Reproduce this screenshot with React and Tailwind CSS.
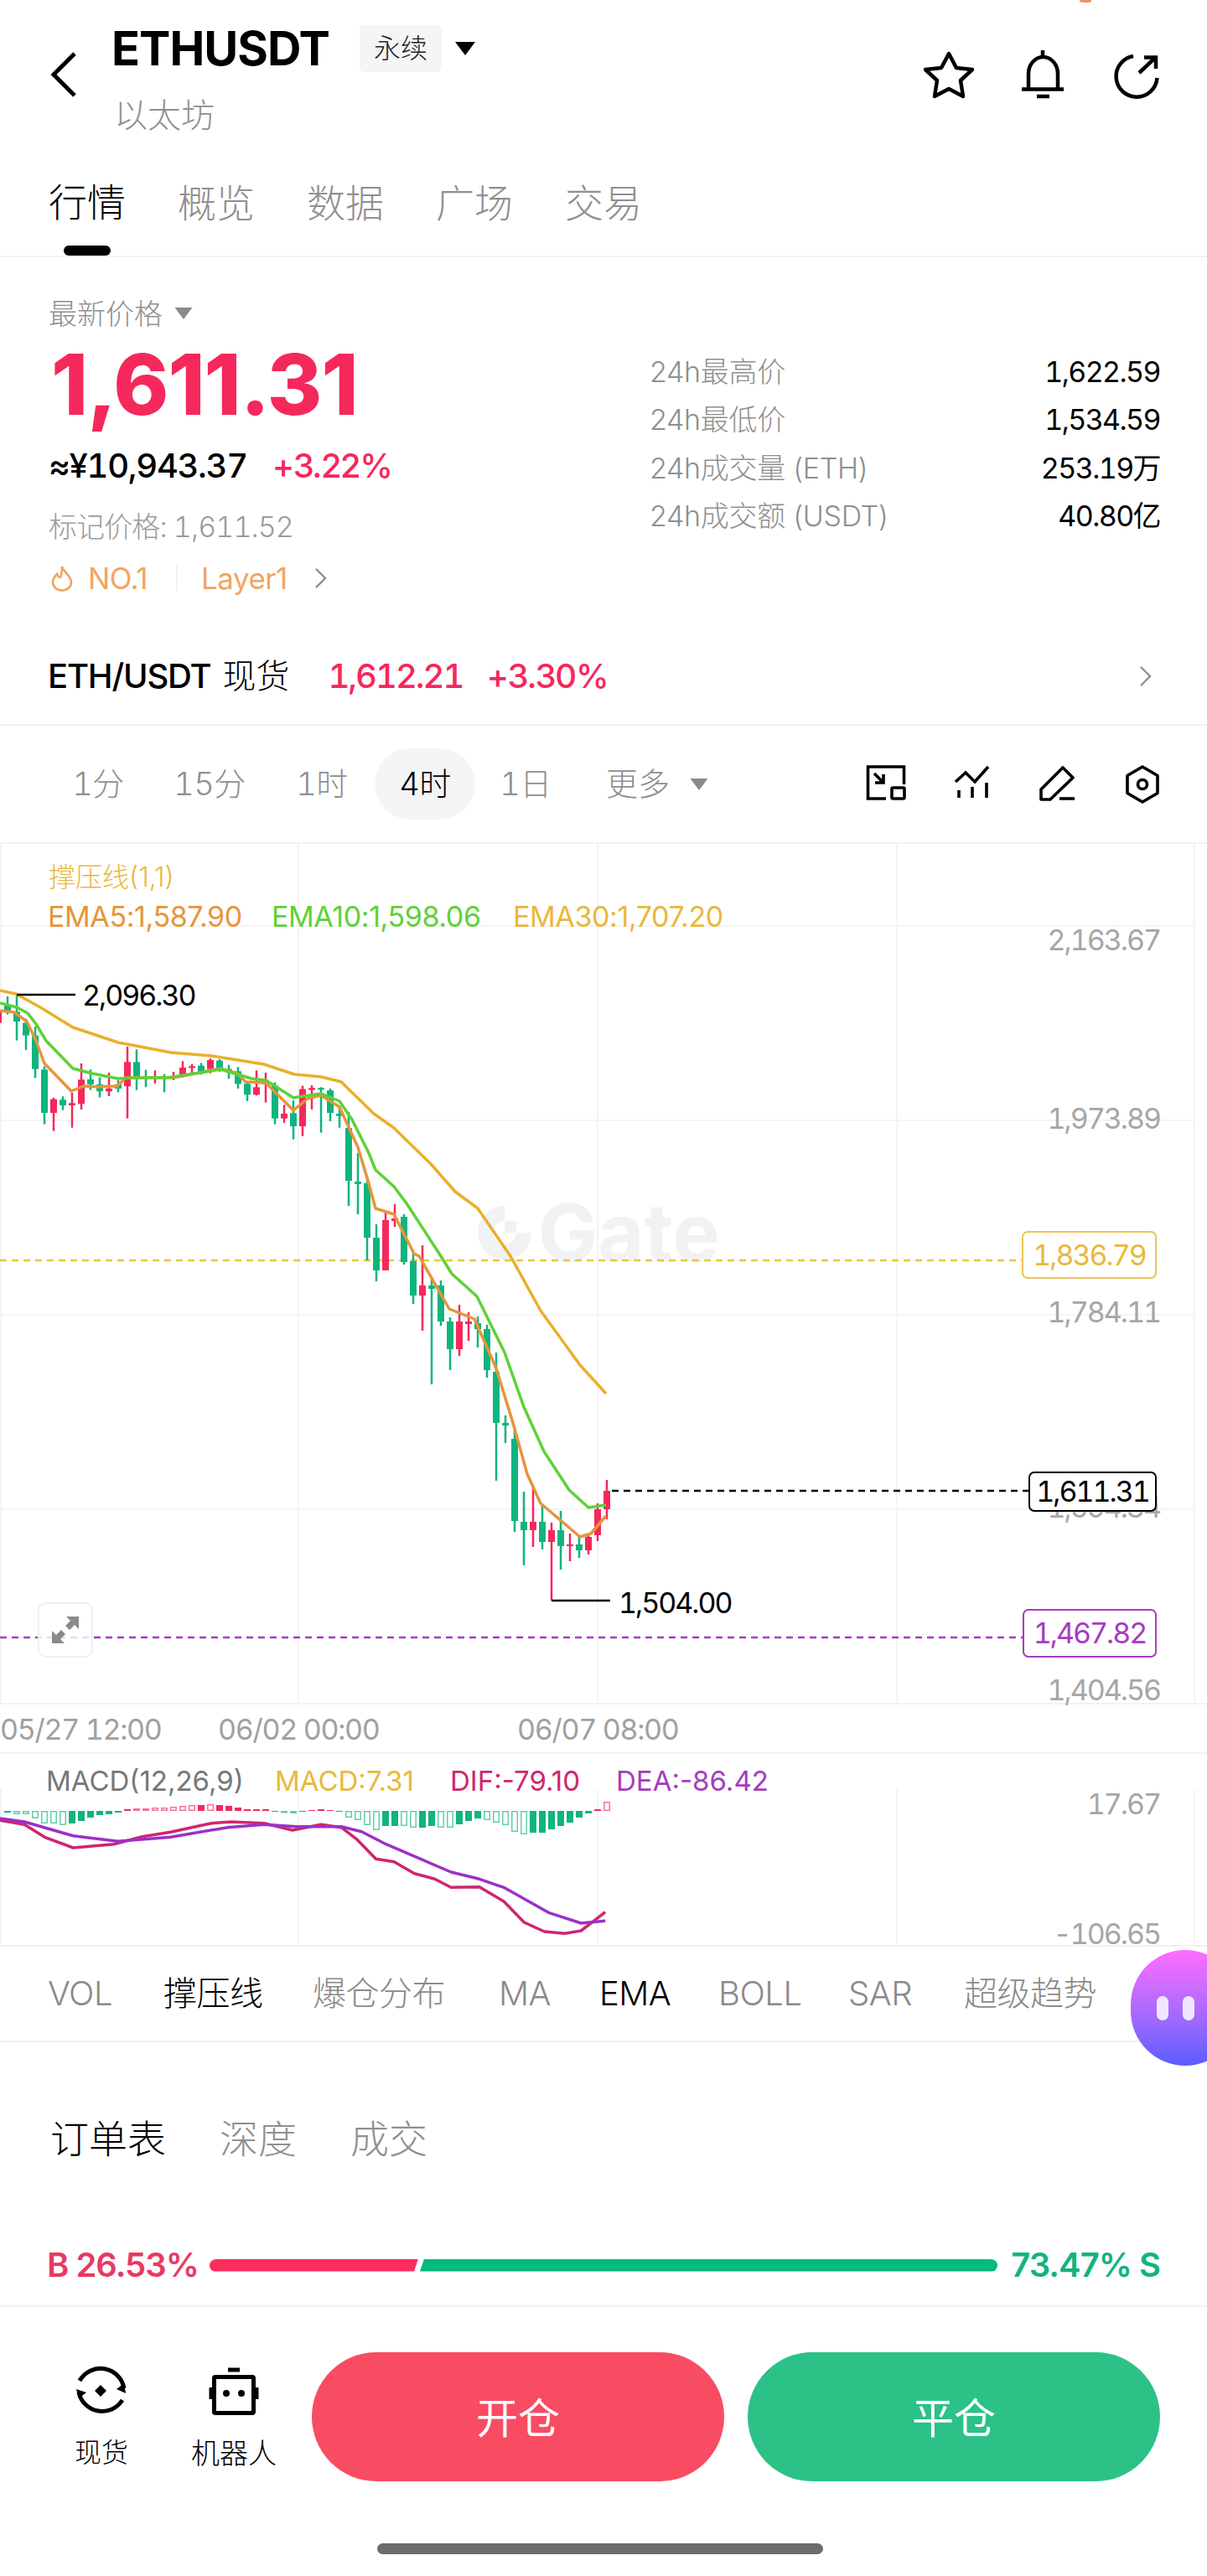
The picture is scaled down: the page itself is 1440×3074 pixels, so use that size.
const RED = '#f5285c';
const GREEN = '#0fb47f';

// candles left part, measured as [index, colour, wickTop, wickBottom, bodyTop, bodyBottom] in y offset / 3 from 1180
const EARLY = [
  [-1, 'r', 60, 125, 80, 125], [0, 'g', 30, 95, 60, 85], [1, 'g', 25, 188, 85, 120], [2, 'g', 110, 222, 125, 170],
  [3, 'g', 138, 322, 170, 290], [4, 'g', 280, 488, 292, 447], [5, 'r', 393, 512, 398, 447], [6, 'g', 388, 437, 400, 420],
  [7, 'r', 375, 500, 412, 420], [8, 'r', 270, 435, 328, 415], [9, 'g', 292, 365, 327, 345], [10, 'g', 320, 392, 345, 370],
  [11, 'r', 303, 387, 360, 370], [12, 'g', 330, 373, 345, 360], [13, 'r', 210, 467, 265, 352], [14, 'g', 220, 365, 265, 320],
  [15, 'g', 293, 355, 318, 325], [16, 'r', 295, 342, 320, 326], [17, 'g', 308, 373, 320, 326], [18, 'r', 300, 330, 318, 322],
  [19, 'r', 262, 320, 285, 310], [20, 'r', 272, 305, 280, 285], [21, 'g', 268, 310, 278, 300], [22, 'r', 252, 305, 258, 290],
  [23, 'g', 255, 300, 260, 288], [24, 'g', 275, 325, 290, 300], [25, 'g', 283, 360, 298, 343], [26, 'g', 335, 405, 343, 382],
  [27, 'r', 295, 385, 355, 382], [28, 'r', 303, 410, 335, 345], [29, 'g', 338, 488, 350, 467], [30, 'r', 418, 483, 450, 467],
  [31, 'g', 402, 542, 448, 495], [32, 'r', 350, 530, 362, 495], [33, 'r', 348, 435, 358, 365], [34, 'g', 355, 518, 358, 362],
  [35, 'g', 360, 477, 367, 447], [36, 'g', 420, 500, 450, 458],
].map(([i, c, a, b, d, e]) => [i, c, 1180 + a / 3, 1180 + b / 3, 1180 + d / 3, 1180 + e / 3]);

const LATE = [
  [37, 'g', 1328, 1440, 1347, 1410], [38, 'g', 1377, 1450, 1411, 1414], [39, 'g', 1405, 1505, 1413, 1478],
  [40, 'g', 1462, 1530, 1478, 1517], [41, 'r', 1448, 1517, 1457, 1517], [42, 'r', 1438, 1465, 1455, 1458],
  [43, 'g', 1450, 1510, 1453, 1507], [44, 'g', 1495, 1557, 1506, 1547], [45, 'r', 1487, 1589, 1535, 1547],
  [46, 'g', 1527, 1653, 1535, 1539], [47, 'g', 1529, 1583, 1535, 1578], [48, 'g', 1573, 1636, 1578, 1611],
  [49, 'r', 1558, 1619, 1578, 1611], [50, 'r', 1567, 1601, 1578, 1581], [51, 'g', 1572, 1609, 1580, 1587],
  [52, 'g', 1582, 1645, 1587, 1636], [53, 'g', 1615, 1768, 1638, 1699], [54, 'g', 1690, 1723, 1699, 1702],
  [55, 'g', 1703, 1829, 1718, 1816], [56, 'g', 1781, 1869, 1817, 1827], [57, 'r', 1774, 1847, 1817, 1827],
  [58, 'g', 1797, 1850, 1817, 1841], [59, 'r', 1818, 1911, 1827, 1841], [60, 'g', 1804, 1874, 1827, 1846],
  [61, 'r', 1831, 1864, 1844, 1846], [62, 'g', 1833, 1860, 1844, 1851], [63, 'r', 1833, 1856, 1835, 1851],
  [64, 'r', 1795, 1840, 1802, 1833], [65, 'r', 1767, 1814, 1780, 1802],
];

const EMA30 = '0,1183 19,1187 48,1203 87,1227 141,1245 204,1257 252,1261 315,1271 351,1283 383,1286 407,1292 446,1330 470,1347 514,1390 543,1423 570,1443 609,1500 645,1565 692,1630 723,1664';
const EMA10 = '0,1198 20,1203 33,1210 43,1223 55,1243 87,1276 110,1282 140,1288 173,1287 200,1287 233,1282 263,1277 283,1283 300,1288 317,1290 350,1311 383,1306 405,1315 420,1337 440,1377 448,1397 470,1417 485,1437 526,1500 539,1521 569,1548 602,1615 625,1680 649,1733 679,1779 702,1800 723,1797';
const EMA5 = '0,1207 17,1209 32,1220 43,1243 53,1270 85,1303 100,1297 117,1298 140,1297 150,1287 173,1287 207,1287 233,1282 263,1276 283,1282 293,1292 317,1293 350,1326 367,1312 383,1308 405,1322 427,1370 439,1410 448,1443 470,1450 494,1497 500,1500 536,1563 566,1575 592,1634 612,1699 629,1760 645,1795 692,1835 705,1831 723,1810';

const macdPoints = (pts) => pts.map(([x, y]) => `${(x / 2.063).toFixed(1)},${(2060 + y / 3).toFixed(1)}`).join(' ');
const DEA = macdPoints([[0, 333], [60, 345], [180, 395], [290, 415], [420, 400], [560, 365], [650, 355], [730, 362], [840, 362], [890, 380], [950, 425], [1110, 525], [1180, 550], [1240, 580], [1350, 670], [1430, 708], [1490, 700]]);
const DIF = macdPoints([[0, 340], [60, 355], [110, 400], [180, 438], [280, 425], [350, 398], [420, 382], [520, 350], [570, 345], [650, 350], [720, 375], [790, 355], [840, 365], [880, 410], [925, 478], [970, 488], [1020, 530], [1070, 550], [1110, 580], [1180, 578], [1240, 630], [1290, 705], [1340, 738], [1390, 745], [1430, 735], [1490, 668]]);

const HIST = [-2, -4, -4, -9, -15, -15, -17, -15, -12, -8, -5, -4, -2, 2, 3, 3, 4, 4, 5, 6, 7, 7, 8, 7, 6, 4, 2, 2, 2, -1, -2, -3, -1, 1, 2, 1, -1, -8, -11, -17, -23, -18, -18, -18, -20, -20, -18, -20, -20, -16, -12, -9, -11, -14, -17, -25, -28, -26, -26, -22, -18, -14, -8, -3, 2, 11];
const HOLLOW = new Set([1, 2, 3, 4, 5, 6, 14, 15, 16, 17, 18, 19, 20, 22, 30, 31, 37, 38, 39, 40, 43, 44, 47, 48, 52, 53, 54, 55, 56, 65]);

const GRID_X = [356, 713, 1070, 1425];

function Caret({ className }) {
  return (
    <svg viewBox="0 0 24 16" className={className}>
      <path d="M0 0H24L12 16Z" fill="currentColor" />
    </svg>
  );
}

function Chevron({ className }) {
  return (
    <svg viewBox="0 0 16 28" fill="none" stroke="currentColor" strokeWidth="2.5" className={className}>
      <path d="M2 2L14 14L2 26" />
    </svg>
  );
}

function Header() {
  return (
    <header className="flex items-start h-[190px] pl-[60px] pr-[54px]">
      <svg viewBox="0 0 32 54" fill="none" stroke="#000" strokeWidth="5" className="w-[32px] h-[54px] mt-[62px] mr-[41px] shrink-0">
        <path d="M29 2L4 27L29 52" />
      </svg>
      <div className="mt-[26px]">
        <div className="flex items-center h-[64px]">
          <span className="w-[264px] text-[56px] leading-none font-bold tracking-[-1px] text-black">ETHUSDT</span>
          <span className="ml-[32px] w-[98px] h-[56px] rounded-[6px] bg-[#f5f5f5] flex items-center justify-center text-[32px] font-light text-[#222]">永续</span>
          <Caret className="ml-[16px] w-[24px] h-[16px] text-black" />
        </div>
        <div className="mt-[24px] ml-[3px] text-[40px] leading-[48px] font-light text-[#8f8f8f]">以太坊</div>
      </div>
      <div className="ml-auto flex gap-[52px] mt-[60px]">
        <svg viewBox="12 10 60 60" fill="none" stroke="#000" strokeWidth="4.5" strokeLinejoin="round" className="w-[60px] h-[60px]">
          <path d="M42 14L51 31L70 33L56 46L59 65L42 56L25 65L28 46L14 33L33 31Z" />
        </svg>
        <svg viewBox="124 10 60 60" fill="none" stroke="#000" strokeWidth="4.5" className="w-[60px] h-[60px]">
          <path d="M137 56V38A17.5 20 0 0 1 172 38V56" />
          <path d="M129 56.5H179M147 65H162M154 10V18" />
        </svg>
        <svg viewBox="236 10 60 60" fill="none" stroke="#000" strokeWidth="4.5" className="w-[60px] h-[60px]">
          <path d="M262 17A24.5 24.5 0 1 0 290.5 43" />
          <path d="M269 37L287 20M275 18.5H289V32" />
        </svg>
      </div>
    </header>
  );
}

function MainTabs() {
  const tabs = ['行情', '概览', '数据', '广场', '交易'];
  return (
    <nav className="flex gap-[66px] h-[117px] pl-[60px] border-b-2 border-[#f2f2f2]">
      {tabs.map((t, i) => (
        <div key={t} className="flex flex-col items-center w-[88px]">
          <span className={`h-[104px] flex items-center text-[46px] font-light whitespace-nowrap ${i === 0 ? 'text-black' : 'text-[#8f8f8f]'}`}>{t}</span>
          {i === 0 && <span className="w-[56px] h-[12px] rounded-full bg-black" />}
        </div>
      ))}
    </nav>
  );
}

function PriceBlock() {
  const stats = [
    ['24h最高价', '1,622.59'],
    ['24h最低价', '1,534.59'],
    ['24h成交量 (ETH)', '253.19万'],
    ['24h成交额 (USDT)', '40.80亿'],
  ];
  return (
    <section className="flex h-[443px]">
      <div className="w-[775px] pl-[58px] pt-[47px]">
        <div className="flex items-center h-[40px] text-[#8f8f8f]">
          <span className="text-[34px] font-light">最新价格</span>
          <Caret className="ml-[14px] w-[22px] h-[14px] text-[#8a8a8a]" />
        </div>
        <div className="mt-[10px] ml-[3px] h-[110px] flex items-center text-[100px] leading-none font-extrabold tracking-[-1px] text-[#f5285c]">1,611.31</div>
        <div className="mt-[17px] h-[50px] flex items-center text-[40px] font-medium tracking-[-1.3px] tabular-nums">
          <span className="text-black">≈¥10,943.37</span>
          <span className="ml-[30px] text-[#f5285c] tracking-[-1.5px] [font-variant-numeric:normal]">+3.22%</span>
        </div>
        <div className="mt-[27px] h-[40px] flex items-center text-[34px] text-[#9b9b9b] font-light tabular-nums tracking-[-0.9px]">标记价格: 1,611.52</div>
        <div className="mt-[22px] h-[40px] flex items-center text-[35px] text-[#f2a45f]">
          <svg viewBox="0 0 28 32" fill="none" stroke="currentColor" strokeWidth="2.6" className="ml-[2px] w-[28px] h-[32px]">
            <path d="M14 2C15 8 25 13 25 21A11 9.5 0 0 1 3 21C3 16 6 13 8 11C9 14 10 15 12 15C14 11 14 6 14 2Z" />
          </svg>
          <span className="ml-[17px] w-[72px] tracking-[-0.5px]">NO.1</span>
          <span className="ml-[33px] w-[2px] h-[32px] bg-[#f3f3f3]" />
          <span className="ml-[28px] tracking-[-0.5px]">Layer1</span>
          <Chevron className="ml-[32px] w-[15px] h-[26px] text-[#8f8f8f]" />
        </div>
      </div>
      <div className="flex-1 pr-[56px] pt-[116px] flex flex-col gap-[17.5px]">
        {stats.map(([label, value]) => (
          <div key={label} className="flex items-center justify-between h-[40px] text-[34px]">
            <span className="font-light text-[#8f8f8f] tracking-[-0.3px]">{label}</span>
            <span className="text-black tracking-[-1.6px] tabular-nums">{value}</span>
          </div>
        ))}
      </div>
    </section>
  );
}

function SpotRow() {
  return (
    <section className="flex items-center h-[116px] pl-[57px] pr-[66px] border-b-2 border-[#f2f2f2] text-[40px]">
      <span className="text-black font-medium tracking-[-1.2px]">ETH/USDT</span>
      <span className="ml-[14px] font-light text-black">现货</span>
      <span className="ml-[46px] text-[#f5285c] font-medium tracking-[-2px] tabular-nums">1,612.21</span>
      <span className="ml-[28px] text-[#f5285c] font-medium tracking-[-1.2px]">+3.30%</span>
      <Chevron className="ml-auto w-[15px] h-[28px] text-[#8f8f8f]" />
    </section>
  );
}

function IntervalRow() {
  const items = [
    ['1分', 'w-[120px]'],
    ['15分', 'w-[122px] ml-[12px]'],
    ['1时', 'w-[120px] ml-[13px]'],
    ['4时', 'w-[120px] ml-[3px] bg-[#f5f5f5] text-black'],
    ['1日', 'w-[120px]'],
  ];
  return (
    <section className="flex items-center h-[141px] pl-[57px] pr-[52px] border-b-2 border-[#f2f2f2]">
      <div className="flex items-center">
        {items.map(([t, c]) => (
          <span key={t} className={`h-[85px] rounded-[43px] flex items-center justify-center text-[38px] font-light tabular-nums tracking-[-0.5px] text-[#8f8f8f] ${c}`}>
            {t}
          </span>
        ))}
        <span className="ml-[36px] h-[85px] flex items-center text-[38px] font-light text-[#8f8f8f]">
          更多
          <Caret className="ml-[24px] w-[22px] h-[14px] text-[#8a8a8a]" />
        </span>
      </div>
      <div className="ml-auto flex gap-[52px] text-black">
        <svg viewBox="12 9 50 50" fill="none" stroke="currentColor" strokeWidth="3.6" className="w-[50px] h-[50px]">
          <path d="M37 51H15.5V13H58.5V34" />
          <rect x="44" y="38" width="15" height="13" rx="1.5" />
          <path d="M23 21L34 32M34 22V32H24" />
        </svg>
        <svg viewBox="113 9 50 50" fill="none" stroke="currentColor" strokeWidth="3.6" className="w-[50px] h-[50px]">
          <path d="M119 31L131 20L142 31L158 13M123 41V50M139 37V50M156 32V50" />
        </svg>
        <svg viewBox="216 6 50 50" fill="none" stroke="currentColor" strokeWidth="3.6" strokeLinejoin="round" className="w-[50px] h-[50px]">
          <path d="M248 11L260 23L233 49H222V37Z" />
          <path d="M244 48H262" />
        </svg>
        <svg viewBox="318 7 50 50" fill="none" stroke="currentColor" strokeWidth="3.6" strokeLinejoin="round" className="w-[50px] h-[50px]">
          <path d="M343 11L361 21.5V42.5L343 53L325 42.5V21.5Z" />
          <circle cx="343" cy="32" r="5.5" />
        </svg>
      </div>
    </section>
  );
}

function AxisLabel({ className, children }) {
  return <span className={`absolute right-[56px] -translate-y-1/2 text-[34px] leading-none text-[#a6a6a6] tracking-[-2px] tabular-nums ${className}`}>{children}</span>;
}

function PriceTag({ className, children }) {
  return (
    <span className={`absolute bg-white flex items-center justify-center border-2 rounded-[7px] text-[34px] leading-none tracking-[-2px] tabular-nums ${className}`}>{children}</span>
  );
}

function MainChart() {
  const candles = [...EARLY, ...LATE];
  return (
    <section className="relative h-[1027px] border-b-2 border-[#f2f2f2]">
      {/* watermark sits under the candles */}
      <div className="absolute left-[570px] top-[416px] flex items-center text-[#f1f2f3]">
        <svg viewBox="0 0 64 64" className="w-[64px] h-[64px]">
          <path d="M32 0A32 32 0 1 0 64 32H46A14 14 0 1 1 32 18Z" fill="currentColor" />
          <rect x="32" y="18" width="14" height="14" fill="currentColor" />
        </svg>
        <span className="ml-[8px] text-[95px] leading-none font-bold">Gate</span>
      </div>
      <svg viewBox="0 1008 1440 1027" className="absolute inset-0 w-[1440px] h-[1027px]">
        {GRID_X.map((x) => <line key={x} x1={x} x2={x} y1="1008" y2="2035" stroke="#f4f4f4" strokeWidth="2" />)}
        <line x1="1" x2="1" y1="1008" y2="2035" stroke="#f4f4f4" strokeWidth="2" />
        {[1106, 1338, 1570, 1802].map((y) => <line key={y} x1="0" x2="1425" y1={y} y2={y} stroke="#f4f4f4" strokeWidth="2" />)}
        <line x1="0" x2="1219" y1="1505" y2="1505" stroke="#e9c63b" strokeWidth="2.5" strokeDasharray="8 6" />
        <line x1="0" x2="1220" y1="1955" y2="1955" stroke="#a63cc0" strokeWidth="2.5" strokeDasharray="8 6" />
        <line x1="730" x2="1227" y1="1780" y2="1780" stroke="#000" strokeWidth="2.5" strokeDasharray="8 6" />
        {candles.map(([i, c, wt, wb, bt, bb]) => {
          const x = 9 + 11 * i;
          const fill = c === 'r' ? RED : GREEN;
          return (
            <g key={i} fill={fill}>
              <rect x={x - 1.25} y={wt} width="2.5" height={wb - wt} />
              <rect x={x - 4} y={bt} width="8" height={Math.max(bb - bt, 2)} />
            </g>
          );
        })}
        <polyline points={EMA30} fill="none" stroke="#e9b02c" strokeWidth="3.5" strokeLinejoin="round" />
        <polyline points={EMA5} fill="none" stroke="#e5963a" strokeWidth="3.5" strokeLinejoin="round" />
        <polyline points={EMA10} fill="none" stroke="#5fd138" strokeWidth="3.5" strokeLinejoin="round" />
        <path d="M20 1188H90" stroke="#000" strokeWidth="2.5" />
        <path d="M658 1911H728" stroke="#000" strokeWidth="2.5" />
      </svg>

      <div className="absolute left-[58px] top-[20px] text-[32px] leading-[40px] font-light text-[#e9b83c]">撑压线(1,1)</div>
      <div className="absolute left-[57px] top-[67px] flex text-[34px] leading-[40px] tracking-[-0.4px]">
        <span className="w-[267px] text-[#e5963a]">EMA5:1,587.90</span>
        <span className="w-[288px] text-[#5fd138]">EMA10:1,598.06</span>
        <span className="text-[#e9b83c]">EMA30:1,707.20</span>
      </div>

      <AxisLabel className="top-[115px]">2,163.67</AxisLabel>
      <AxisLabel className="top-[328px]">1,973.89</AxisLabel>
      <AxisLabel className="top-[559px]">1,784.11</AxisLabel>
      <AxisLabel className="top-[792px]">1,594.34</AxisLabel>
      <AxisLabel className="top-[1010px]">1,404.56</AxisLabel>

      <span className="absolute left-[98px] top-[181px] -translate-y-1/2 text-[34px] leading-none tracking-[-2px] tabular-nums text-black">2,096.30</span>
      <span className="absolute left-[738px] top-[906px] -translate-y-1/2 text-[34px] leading-none tracking-[-2px] tabular-nums text-black">1,504.00</span>

      <PriceTag className="left-[1219px] top-[462px] w-[161px] h-[57px] border-[#eec356] text-[#e9b83c]">1,836.79</PriceTag>
      <PriceTag className="left-[1227px] top-[749px] w-[153px] h-[48px] border-black text-black">1,611.31</PriceTag>
      <PriceTag className="left-[1220px] top-[913px] w-[160px] h-[58px] border-[#a63cc0] text-[#a63cc0]">1,467.82</PriceTag>

      <div className="absolute left-[45px] top-[905px] w-[66px] h-[66px] rounded-[10px] border-2 border-[#f0f0f0] bg-white/80 flex items-center justify-center">
        <svg viewBox="0 0 36 36" className="w-[36px] h-[36px]" fill="#8a8a8a">
          <path d="M19 2H34V17L29 12L23 18L18 13L24 7Z" />
          <path d="M17 34H2V19L7 24L13 18L18 23L12 29Z" />
        </svg>
      </div>
    </section>
  );
}

function DateRow() {
  return (
    <div className="flex h-[59px] items-center border-b-2 border-[#f2f2f2] text-[34px] tracking-[-1.3px] tabular-nums text-[#a0a0a0] pt-[1px]">
      <span className="w-[260px]">05/27 12:00</span>
      <span className="w-[357px]">06/02 00:00</span>
      <span>06/07 08:00</span>
    </div>
  );
}

function MacdChart() {
  return (
    <section className="relative h-[230px] border-b-2 border-[#f2f2f2]">
      <svg viewBox="0 2094 1440 229" className="absolute inset-0 w-[1440px] h-[229px]">
        {GRID_X.map((x) => <line key={x} x1={x} x2={x} y1="2136" y2="2323" stroke="#f4f4f4" strokeWidth="2" />)}
        <line x1="1" x2="1" y1="2136" y2="2323" stroke="#f4f4f4" strokeWidth="2" />
        {HIST.map((v, i) => {
          const x = 5 + 11 * i;
          const color = v > 0 ? RED : GREEN;
          const h = Math.abs(v);
          const y = v > 0 ? 2162 - h : 2162;
          return HOLLOW.has(i) ? (
            <rect key={i} x={x + 0.75} y={y + 0.75} width="6.5" height={Math.max(h - 1.5, 1)} fill="none" stroke={color} strokeWidth="1.5" opacity="0.65" />
          ) : (
            <rect key={i} x={x} y={y} width="8" height={h} fill={color} />
          );
        })}
        <polyline points={DIF} fill="none" stroke="#d0256e" strokeWidth="3.5" strokeLinejoin="round" />
        <polyline points={DEA} fill="none" stroke="#9b30c8" strokeWidth="3.5" strokeLinejoin="round" />
      </svg>
      <div className="absolute left-[55px] top-[12px] flex text-[33px] leading-[40px]">
        <span className="w-[273px] text-[#777]">MACD(12,26,9)</span>
        <span className="w-[209px] text-[#e9b83c]">MACD:7.31</span>
        <span className="w-[198px] text-[#d0256e]">DIF:-79.10</span>
        <span className="text-[#a63cc0]">DEA:-86.42</span>
      </div>
      <AxisLabel className="top-[60px]">17.67</AxisLabel>
      <AxisLabel className="top-[215px]">-106.65</AxisLabel>
    </section>
  );
}

function IndicatorTabs() {
  const tabs = [
    ['VOL', 'w-[138px]', ''],
    ['撑压线', 'w-[178px]', 'text-black'],
    ['爆仓分布', 'w-[222px]', ''],
    ['MA', 'w-[120px]', ''],
    ['EMA', 'w-[142px]', 'text-black'],
    ['BOLL', 'w-[155px]', ''],
    ['SAR', 'w-[138px]', ''],
    ['超级趋势', '', ''],
  ];
  return (
    <section className="flex items-center h-[114px] pl-[57px] border-b-2 border-[#f2f2f2] text-[40px] tracking-[-0.5px] text-[#8a8a8a] font-light">
      {tabs.map(([t, w, c]) => (
        <span key={t} className={`whitespace-nowrap ${w} ${c}`}>{t}</span>
      ))}
    </section>
  );
}

function OrderSection() {
  return (
    <section className="h-[316px] pt-[85px] border-b-2 border-[#f2f2f2]">
      <div className="flex gap-[64px] pl-[60px] h-[60px] items-center text-[46px] font-light">
        <span className="text-black">订单表</span>
        <span className="text-[#8f8f8f]">深度</span>
        <span className="text-[#8f8f8f]">成交</span>
      </div>
      <div className="mt-[96px] flex items-center h-[50px] px-[56px] text-[40px] font-semibold tracking-[-1px]">
        <span className="w-[194px] text-[#e83a62] whitespace-nowrap">B 26.53%</span>
        <div className="flex w-[940px] h-[15px] gap-[2px]">
          <div className="w-[249px] rounded-l-full bg-[#fb2d5c] [clip-path:polygon(0_0,100%_0,calc(100%-5px)_100%,0_100%)]" />
          <div className="flex-1 rounded-r-full bg-[#05b97f] [clip-path:polygon(5px_0,100%_0,100%_100%,0_100%)]" />
        </div>
        <span className="ml-auto text-[#12b37f] whitespace-nowrap">73.47% S</span>
      </div>
    </section>
  );
}

function BottomBar() {
  return (
    <footer>
      <div className="flex items-start pt-[54px] pl-[56px] pr-[56px]">
        <div className="flex gap-[28px] mt-[15px]">
          <div className="w-[130px] flex flex-col items-center">
            <svg viewBox="20 12 62 62" className="w-[62px] h-[62px]" fill="none" stroke="#000" strokeWidth="5">
              <path d="M25 31A28.5 28.5 0 0 1 78 40" />
              <path d="M76 54A28.5 28.5 0 0 1 24 45" />
              <path d="M69 41L80 46L78 34Z" fill="#000" stroke="none" />
              <path d="M21 41L33 45L24 52Z" fill="#000" stroke="none" />
              <path d="M50 36L57 43L50 50L43 43Z" fill="#000" stroke="none" />
            </svg>
            <span className="mt-[23px] h-[40px] flex items-center text-[32px] font-light text-black">现货</span>
          </div>
          <div className="w-[130px] flex flex-col items-center">
            <svg viewBox="178 12 62 62" className="w-[62px] h-[62px]" fill="none" stroke="#000" strokeWidth="5" strokeLinejoin="round">
              <rect x="185.5" y="26.5" width="47" height="43" rx="1.5" />
              <path d="M202 18H216" />
              <path d="M182 39V53M236 39V53" />
              <circle cx="200" cy="46" r="4" fill="#000" stroke="none" />
              <circle cx="218" cy="46" r="4" fill="#000" stroke="none" />
            </svg>
            <span className="mt-[23px] h-[40px] flex items-center text-[34px] font-light text-black whitespace-nowrap">机器人</span>
          </div>
        </div>
        <div className="ml-[28px] w-[492px] h-[154px] pt-[4px] rounded-full bg-[#f84c63] flex items-center justify-center text-[50px] text-white">开仓</div>
        <div className="ml-[28px] w-[492px] h-[154px] pt-[4px] rounded-full bg-[#2bc187] flex items-center justify-center text-[50px] text-white">平仓</div>
      </div>
      <div className="mt-[74px] ml-[450px] w-[532px] h-[13px] rounded-full bg-[#6b6b6b]" />
    </footer>
  );
}

export default function App() {
  return (
    <div className="relative w-[1440px] h-[3074px] overflow-hidden bg-white font-['Inter','Noto_Sans_CJK_SC',sans-serif]">
      <span className="absolute left-[1288px] top-0 w-[14px] h-[3px] rounded-b-full bg-[#f0906a]" />
      <Header />
      <MainTabs />
      <PriceBlock />
      <SpotRow />
      <IntervalRow />
      <MainChart />
      <DateRow />
      <MacdChart />
      <IndicatorTabs />
      <OrderSection />
      <BottomBar />
      {/* floating assistant bubble */}
      <div className="absolute left-[1349px] top-[2327px] w-[130px] h-[138px] rounded-full bg-gradient-to-b from-[#ff6bff] to-[#5a5cff] flex items-center pl-[31px] gap-[17px]">
        <span className="w-[14px] h-[29px] rounded-full bg-[#f1e6ff]" />
        <span className="w-[14px] h-[29px] rounded-full bg-[#f1e6ff]" />
      </div>
    </div>
  );
}
